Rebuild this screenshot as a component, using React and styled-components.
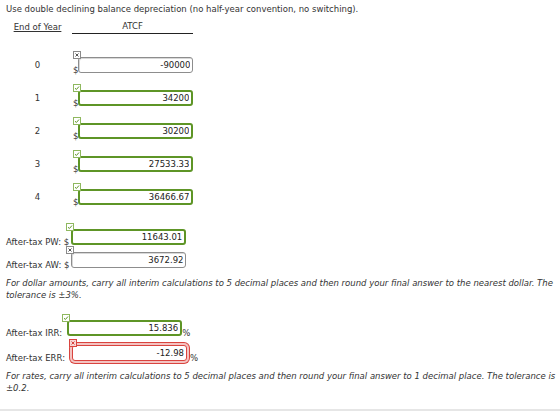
import React from "react";
import styled, { createGlobalStyle, css } from "styled-components";

const GlobalStyle = createGlobalStyle`
  html, body {
    margin: 0;
    padding: 0;
    background: #fff;
  }
  body {
    font-family: "DejaVu Sans", Verdana, sans-serif;
    font-size: 8.5px;
    color: #333;
  }
`;

const Page = styled.div`
  width: 560px;
  height: 411px;
  box-sizing: border-box;
  padding: 3px 4px 0 6px;
  display: flex;
  flex-direction: column;
`;

const Intro = styled.p`
  margin: 0;
  line-height: 12px;
`;

const Table = styled.div`
  margin-top: 5px;
  display: flex;
  flex-direction: column;
`;

const Row = styled.div`
  display: grid;
  grid-template-columns: 63px 120px;
  column-gap: 4px;
  align-items: center;
  height: ${(p) => (p.$head ? "12px" : "33px")};
  line-height: 12px;
`;

const HeadYear = styled.div`
  text-align: center;
  text-decoration: underline;
`;

const HeadAtcf = styled.div`
  text-align: center;
  border-bottom: 1px solid #222;
  margin-left: -1px;
  padding-bottom: 1px;
`;

const Year = styled.div`
  text-align: center;
`;

const Line = styled.div`
  display: flex;
  align-items: flex-end;
  line-height: 12px;
`;

const Unit = styled.span`
  margin-bottom: -3px;
  white-space: pre;
`;

const Rows = styled.div`
  margin-top: 16px;
`;

const Answers = styled.div`
  margin-top: 16px;
  display: flex;
  flex-direction: column;
  gap: 7px;
`;

const Rates = styled.div`
  margin-top: 19px;
  display: flex;
  flex-direction: column;
  gap: 9px;
`;

const Note = styled.p`
  margin: 9px 0 0;
  font-style: italic;
  line-height: 12px;
`;

const FieldWrap = styled.span`
  position: relative;
  display: inline-block;
  margin-left: ${(p) => p.$gap || 0}px;
`;

const fieldLooks = {
  none: css`
    border: 1px solid #8d8d8d;
    box-shadow: inset 1px 1px 0 #d8d8d8;
  `,
  right: css`
    border: 2px solid #5e9526;
  `,
  wrong: css`
    border: 1px solid #d9443f;
    box-shadow: 0 0 0 2px #f4c3c1, 0 0 0 3px #d9443f;
    margin: 0 3px;
  `,
};

const Field = styled.input`
  display: block;
  width: 115px;
  height: 16px;
  box-sizing: border-box;
  border-radius: 3px;
  padding: 0 2px 0 0;
  background: #fff;
  font-family: "DejaVu Sans", Verdana, sans-serif;
  font-size: 8.5px;
  color: #222;
  text-align: right;
  outline: none;
  ${(p) => fieldLooks[p.$mark]}
`;

const badgeLooks = {
  none: css`
    border-color: #8a8a8a;
    color: #555;
  `,
  right: css`
    border-color: #8fb85f;
    color: #5e9526;
  `,
  wrong: css`
    border-color: #d9443f;
    background: #f7d5d4;
    color: #d9443f;
  `,
};

const Badge = styled.span`
  position: absolute;
  left: ${(p) => (p.$mark === "wrong" ? 0 : -5)}px;
  top: -6px;
  width: 8px;
  height: 8px;
  box-sizing: border-box;
  border: 1px solid;
  background: #fff;
  display: flex;
  align-items: center;
  justify-content: center;
  ${(p) => badgeLooks[p.$mark]}
`;

const Footer = styled.div`
  margin-top: auto;
  margin-left: -6px;
  margin-right: -4px;
  height: 2px;
  background: #e6e6e6;
`;

const MarkIcon = ({ mark }) =>
  mark === "right" ? (
    <svg width="6" height="6" viewBox="0 0 6 6">
      <polyline points="1,3.2 2.4,4.5 5,1.5" fill="none" stroke="currentColor" strokeWidth="1" />
    </svg>
  ) : (
    <svg width="6" height="6" viewBox="0 0 6 6">
      <path d="M1.5 1.5 L4.5 4.5 M4.5 1.5 L1.5 4.5" stroke="currentColor" strokeWidth="1" />
    </svg>
  );

const AnswerField = ({ value, mark, gap }) => (
  <FieldWrap $gap={gap}>
    <Field $mark={mark} value={value} readOnly />
    <Badge $mark={mark}>
      <MarkIcon mark={mark} />
    </Badge>
  </FieldWrap>
);

const cashFlows = [
  { year: 0, value: "-90000", mark: "none" },
  { year: 1, value: "34200", mark: "right" },
  { year: 2, value: "30200", mark: "right" },
  { year: 3, value: "27533.33", mark: "right" },
  { year: 4, value: "36466.67", mark: "right" },
];

export default function App() {
  return (
    <>
      <GlobalStyle />
      <Page>
        <Intro>Use double declining balance depreciation (no half-year convention, no switching).</Intro>

        <Table>
          <Row $head>
            <HeadYear>End of Year</HeadYear>
            <HeadAtcf>ATCF</HeadAtcf>
          </Row>
          <Rows>
            {cashFlows.map((r) => (
              <Row key={r.year}>
                <Year>{r.year}</Year>
                <Line>
                  <Unit>$</Unit>
                  <AnswerField value={r.value} mark={r.mark} />
                </Line>
              </Row>
            ))}
          </Rows>
        </Table>

        <Answers>
          <Line>
            <Unit>After-tax PW: $</Unit>
            <AnswerField value="11643.01" mark="right" gap={2} />
          </Line>
          <Line>
            <Unit>After-tax AW: $</Unit>
            <AnswerField value="3672.92" mark="none" gap={2} />
          </Line>
        </Answers>

        <Note>
          For dollar amounts, carry all interim calculations to 5 decimal places and then round your final answer to
          the nearest dollar. The tolerance is ±3%.
        </Note>

        <Rates>
          <Line>
            <Unit>After-tax IRR:</Unit>
            <AnswerField value="15.836" mark="right" gap={5} />
            <Unit>%</Unit>
          </Line>
          <Line>
            <Unit>After-tax ERR:</Unit>
            <AnswerField value="-12.98" mark="wrong" gap={4} />
            <Unit>%</Unit>
          </Line>
        </Rates>

        <Note>
          For rates, carry all interim calculations to 5 decimal places and then round your final answer to 1 decimal
          place. The tolerance is ±0.2.
        </Note>

        <Footer />
      </Page>
    </>
  );
}
